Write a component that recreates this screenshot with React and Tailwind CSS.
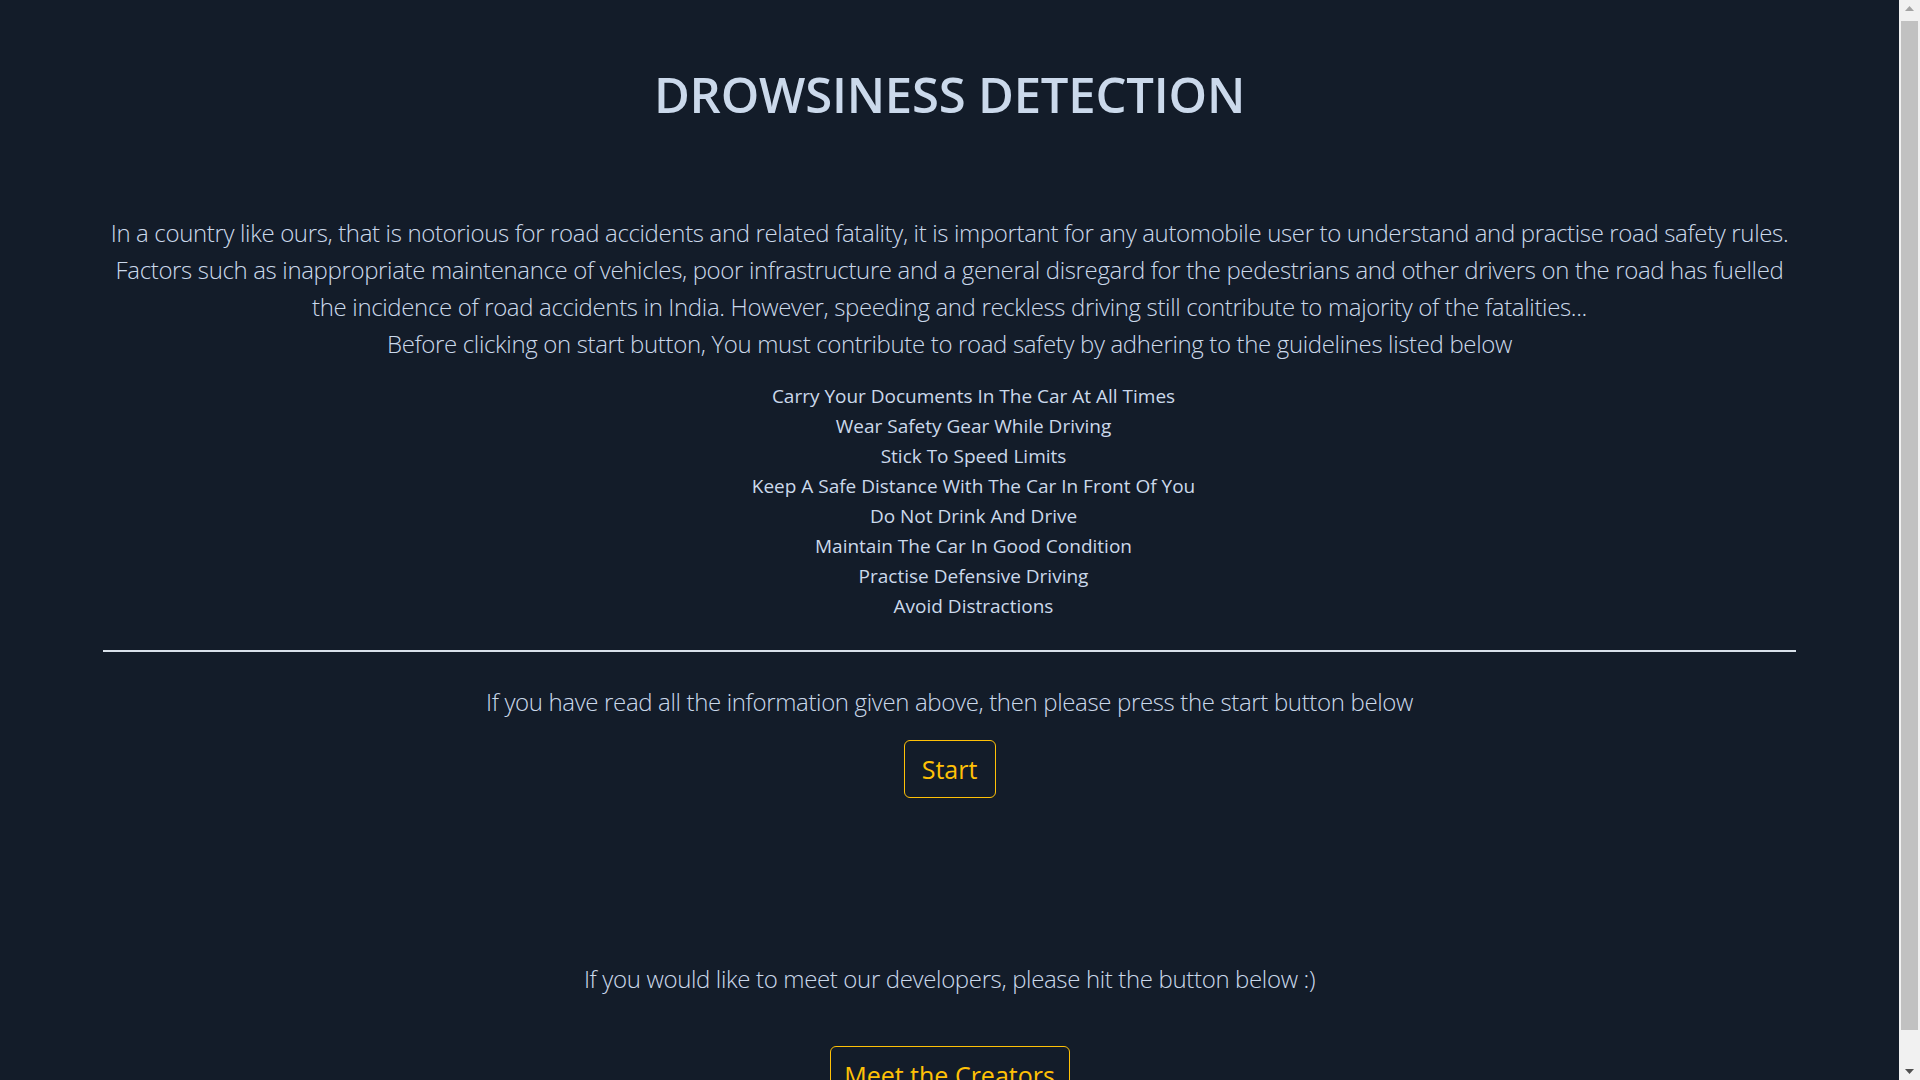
export default function App() {
  const guidelines = [
    "Carry Your Documents In The Car At All Times",
    "Wear Safety Gear While Driving",
    "Stick To Speed Limits",
    "Keep A Safe Distance With The Car In Front Of You",
    "Do Not Drink And Drive",
    "Maintain The Car In Good Condition",
    "Practise Defensive Driving",
    "Avoid Distractions",
  ];
  return (
    <div
      className="flex h-screen overflow-hidden bg-[#131c29] text-[#cbd9eb]"
      style={{ fontFamily: '"Open Sans", "Noto Sans", sans-serif' }}
    >
      <main className="flex min-w-0 flex-1 flex-col items-center pb-[16px] [&>*]:shrink-0">
        <h1 className="mt-[62px] text-[49px] font-semibold leading-[64px] tracking-[-0.2px]">DROWSINESS DETECTION</h1>

        <div className="mt-[88px] w-full px-[104px] text-center text-[24px] font-light leading-[37px] tracking-[-0.35px]">
          <p className="whitespace-nowrap">
            In a country like ours, that is notorious for road accidents and related fatality, it is important for any automobile user to understand and practise road safety rules.
          </p>
          <p className="whitespace-nowrap">
            Factors such as inappropriate maintenance of vehicles, poor infrastructure and a general disregard for the pedestrians and other drivers on the road has fuelled
          </p>
          <p className="whitespace-nowrap">
            the incidence of road accidents in India. However, speeding and reckless driving still contribute to majority of the fatalities...
          </p>
          <p className="whitespace-nowrap">
            Before clicking on start button, You must contribute to road safety by adhering to the guidelines listed below
          </p>
        </div>

        <ul className="mt-[19px] flex flex-col items-center pl-[48px] text-[19px] leading-[30px]">
          {guidelines.map((g) => (
            <li key={g}>{g}</li>
          ))}
        </ul>

        <div className="mt-[29px] w-full px-[103px]">
          <hr className="border-0 border-t-[2px] border-[#d9e1ea]" />
        </div>

        <p className="mt-[31px] text-[24px] font-light leading-[37px] tracking-[-0.35px]">
          If you have read all the information given above, then please press the start button below
        </p>

        <button className="mt-[20px] h-[58px] w-[92px] rounded-[6px] border border-[#ffc107] text-[25px] leading-none text-[#ffc107]">
          Start
        </button>

        <p className="mt-[162px] text-[24px] font-light leading-[37px] tracking-[-0.35px]">
          If you would like to meet our developers, please hit the button below :)
        </p>

        <button className="mt-[49px] h-[58px] w-[240px] rounded-[6px] border border-[#ffc107] text-[25px] leading-none text-[#ffc107]">
          Meet the Creators
        </button>
      </main>

      <aside className="flex w-[21px] shrink-0 flex-col items-center bg-[#f1f1f1]">
        <div className="flex h-[17px] w-full items-center justify-center">
          <svg width="9" height="5" viewBox="0 0 9 5">
            <path d="M4.5 0 L9 5 L0 5 Z" fill="#a3a3a3" />
          </svg>
        </div>
        <div className="mt-[4px] h-[1009px] w-[17px] bg-[#c1c1c1]" />
        <div className="flex-1" />
        <div className="flex h-[17px] w-full items-center justify-center">
          <svg width="9" height="5" viewBox="0 0 9 5">
            <path d="M0 0 L9 0 L4.5 5 Z" fill="#505050" />
          </svg>
        </div>
      </aside>
    </div>
  );
}
